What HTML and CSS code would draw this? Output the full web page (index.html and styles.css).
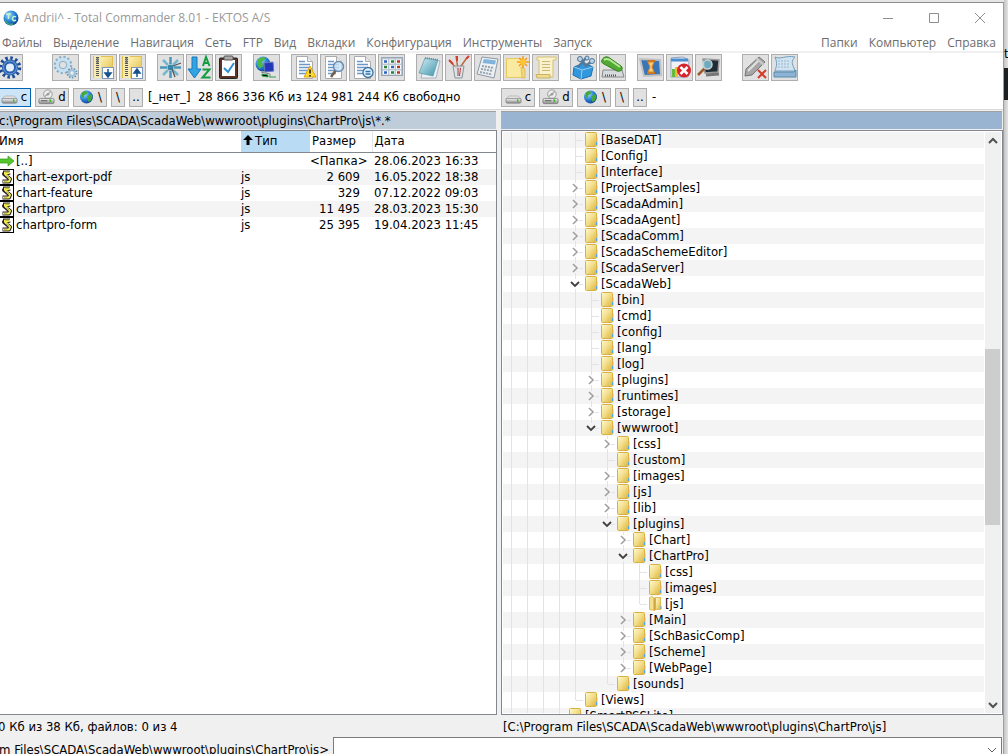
FILE: index.html
```html
<!DOCTYPE html>
<html lang="ru">

<head>
    <meta charset="UTF-8">
    <meta name="viewport" content="width=device-width, initial-scale=1.0">
    <title>Andrii^ - Total Commander 8.01 - EKTOS A/S</title>
    <link rel="stylesheet" href="styles.css">
</head>

<body>
    <!-- Shared icons -->
    <svg class="sprite" aria-hidden="true">
        <defs>
            <linearGradient id="gold" x1="0" y1="0" x2="1" y2="1">
                <stop offset="0" stop-color="#fffbd0" />
                <stop offset=".5" stop-color="#f2dc86" />
                <stop offset="1" stop-color="#d8b23c" />
            </linearGradient>
            <radialGradient id="ocean" cx=".35" cy=".3" r=".8">
                <stop offset="0" stop-color="#9fdcff" />
                <stop offset=".5" stop-color="#2a83d8" />
                <stop offset="1" stop-color="#0b3a8c" />
            </radialGradient>
            <linearGradient id="metal" x1="0" y1="0" x2="0" y2="1">
                <stop offset="0" stop-color="#f4f4f4" />
                <stop offset="1" stop-color="#8d8d8d" />
            </linearGradient>
            <linearGradient id="teal" x1="0" y1="0" x2="1" y2="1">
                <stop offset="0" stop-color="#d6f0f6" />
                <stop offset="1" stop-color="#3d93ab" />
            </linearGradient>
            <symbol id="folder" viewBox="0 0 16 16">
                <rect x=".5" y=".5" width="11" height="14" rx="1" fill="url(#gold)" stroke="#d9b048" />
                <path d="M12 5v9" stroke="#e3bd58" />
                <path d="M11.500 10v3" stroke="#4ba8e8" />
            </symbol>
            <symbol id="folder-open" viewBox="0 0 16 16">
                <rect x="6.500" y="1.500" width="5" height="12" fill="url(#gold)" stroke="#e0bd5c" />
                <path d="M.5 1.500 3 .5 6 2.500V14.500L.5 13.500z" fill="#f4df8e" stroke="#e0bd5c" />
                <path d="M5.500 2v12" stroke="#cda643" stroke-width="2" />
                <path d="M12 10v3" stroke="#4ba8e8" />
            </symbol>
            <symbol id="closed" viewBox="0 0 16 16">
                <path d="M6 4l4 4-4 4" fill="none" stroke="#a0a0a0" stroke-width="1.600" />
            </symbol>
            <symbol id="opened" viewBox="0 0 16 16">
                <path d="M4 6l4 4 4-4" fill="none" stroke="#404040" stroke-width="1.800" />
            </symbol>
            <symbol id="globe" viewBox="0 0 16 16">
                <circle cx="8" cy="8" r="6.500" fill="url(#ocean)" />
                <path d="M3 4c2-2 4-2 6-1l-1 2-2 1-1 3-2-1zM9 7l4-2 1 3-2 4-2 1-1-3z" fill="#45a83c" />
            </symbol>
            <symbol id="disk" viewBox="0 0 18 16">
                <path d="M4 7h10l3 3H1z" fill="#e8e8e8" stroke="#999" stroke-width=".6" />
                <rect x="1" y="9.500" width="16" height="5" rx="1.500" fill="url(#metal)" stroke="#777" stroke-width=".7" />
                <path d="M13.500 10.500v3" stroke="#3fbf2d" stroke-width="1.500" />
            </symbol>
            <symbol id="optical" viewBox="0 0 18 16">
                <circle cx="10.500" cy="5" r="4.500" fill="#eee" stroke="#888" stroke-width=".8" />
                <path d="M10.500 5l3-3M10.500 5l-3 2" stroke="#aaa" stroke-width="1.500" />
                <circle cx="10.500" cy="5" r="1.300" fill="#999" />
                <rect x="1" y="9.500" width="16" height="5.500" rx="1.500" fill="url(#metal)" stroke="#666" stroke-width=".7" />
                <path d="M3 12h7" stroke="#555" />
                <path d="M13 10.500v3" stroke="#3fbf2d" stroke-width="2" />
            </symbol>
            <symbol id="script" viewBox="0 0 16 16">
                <rect x="-2" y=".5" width="15.500" height="15" fill="#fff" stroke="#000" />
                <path d="M3 3.500h7M10 3.500L4 5l6 5-1 2.500H2.500" fill="none" stroke="#222" stroke-width="4" stroke-linejoin="round" />
                <path d="M4 3.500h6M10 3.500L5 5l5 5-1 2.500H3" fill="none" stroke="#f4ea4c" stroke-width="2" stroke-linejoin="round" />
                <path d="M5 3h4M6 7l3 2M4 12h3" stroke="#777" stroke-width=".7" />
            </symbol>
            <symbol id="page" viewBox="0 0 25 25">
                <path d="M4.500 1.500h11l5 5v17h-16z" fill="#fff" stroke="#aaa" />
                <path d="M15.500 1.500v5h5" fill="#e4eaf0" stroke="#aaa" />
                <path d="M7 6.500h6M7 9.500h11M7 12.500h11M7 15.500h11M7 18.500h8" stroke="#6c98c8" stroke-width="1.300" />
            </symbol>
            <symbol id="zip" viewBox="0 0 25 25">
                <rect x="2.500" y="1.500" width="19" height="21" fill="url(#gold)" stroke="#e0c050" />
                <path d="M3 1h7v22H3z" fill="#f7eab0" />
                <path d="M6.500 2v20" stroke="#555" stroke-width="3" stroke-dasharray="1 1" />
                <rect x="5.500" y="3" width="2" height="5" fill="#777" />
                <rect x="11.500" y="12.500" width="11" height="11" fill="#fff" stroke="#7d97b8" />
            </symbol>
        </defs>
    </svg>

    <div class="desktop">
        <main class="window">
            <header class="titlebar">
                <svg class="logo" viewBox="0 0 16 16">
                    <circle cx="8" cy="8" r="7.500" fill="url(#ocean)" />
                    <path d="M3 4h5M5.500 4v5M13 7c-3-2-5 2-2 4l2-1" fill="none" stroke="#c5f3cc" stroke-width="1.500" />
                    <path d="M2 10c2 4 5 5 8 4" fill="none" stroke="#3ca67a" stroke-width="1.500" />
                </svg>
                <h1>Andrii^ - Total Commander 8.01 - EKTOS A/S</h1>
                <div class="window-buttons">
                    <button aria-label="Свернуть"><svg viewBox="0 0 12 12"><path d="M1 6.500h10" /></svg></button>
                    <button aria-label="Развернуть"><svg viewBox="0 0 12 12"><path d="M1.500 1.500h9v9h-9z" /></svg></button>
                    <button aria-label="Закрыть"><svg viewBox="0 0 12 12"><path d="M1 1l10 10M11 1L1 11" /></svg></button>
                </div>
            </header>

            <nav class="menu">
                <button>Файлы</button>
                <button>Выделение</button>
                <button>Навигация</button>
                <button>Сеть</button>
                <button>FTP</button>
                <button>Вид</button>
                <button>Вкладки</button>
                <button>Конфигурация</button>
                <button>Инструменты</button>
                <button>Запуск</button>
                <span class="spacer"></span>
                <button>Папки</button>
                <button>Компьютер</button>
                <button>Справка</button>
            </nav>

            <div class="toolbar">
                <button aria-label="Настройка"><svg viewBox="0 0 25 25">
                    <circle cx="13" cy="12.500" r="9.500" fill="none" stroke="#1c4b94" stroke-width="3.500" stroke-dasharray="2.500 2.470" />
                    <circle cx="13" cy="12.500" r="6" fill="#e6f0fb" stroke="#2a62b0" stroke-width="4" />
                    <circle cx="13" cy="12.500" r="6.500" fill="none" stroke="#6f9fd8" stroke-width="1" />
                </svg></button>
                <span class="sep"></span><span class="sep"></span><span class="sep"></span>
                <button aria-label="Параметры"><svg viewBox="0 0 25 25">
                    <circle cx="10" cy="10" r="8" fill="none" stroke="#87afc9" stroke-width="2.500" stroke-dasharray="2.200 2" />
                    <circle cx="10" cy="10" r="5.500" fill="#e0e0e0" stroke="#c5e0f0" stroke-width="3.500" />
                    <circle cx="10" cy="10" r="3.700" fill="none" stroke="#6d9ab8" stroke-width=".7" />
                    <circle cx="19" cy="18" r="4.500" fill="none" stroke="#6795b4" stroke-width="2" stroke-dasharray="1.500 1.300" />
                    <circle cx="19" cy="18" r="2.700" fill="#eee" stroke="#9fc3dc" stroke-width="2" />
                </svg></button>
                <span class="sep"></span>
                <button aria-label="Упаковать"><svg viewBox="0 0 25 25"><use href="#zip" /><path d="M17 14v7M14 18l3 4 3-4z" fill="#15518c" stroke="#15518c" stroke-width="1.500" /></svg></button>
                <button aria-label="Распаковать"><svg viewBox="0 0 25 25"><use href="#zip" /><path d="M17 22v-7M14 18l3-4 3 4z" fill="#15518c" stroke="#15518c" stroke-width="1.500" /></svg></button>
                <span class="sep"></span>
                <button aria-label="Выделить все"><svg viewBox="0 0 25 25">
                    <path d="M12.500 2v7M12.500 16v7M2 12.500h7M16 12.500h7" stroke="#4b96b8" stroke-width="2.500" />
                    <path d="M5 5l5 5M15 15l5 5M20 5l-5 5M10 15l-5 5" stroke="#75b7d1" stroke-width="2.500" />
                    <circle cx="12.500" cy="12.500" r="3" fill="#3685aa" />
                    <path d="M15 11l8-3M14 14l3 8" stroke="#555" stroke-width="1.300" />
                </svg></button>
                <button aria-label="Сортировка"><svg viewBox="0 0 25 25">
                    <path d="M5 2h5v12h4L7.500 23 1 14h4z" fill="#31a4e4" stroke="#1878b8" />
                    <path d="M16 11l3-9 3.500 9M17 8h5" fill="none" stroke="#139c42" stroke-width="2" />
                    <path d="M15.500 14.500h7l-7 8h8" fill="none" stroke="#139c42" stroke-width="2" />
                </svg></button>
                <button aria-label="Проверка"><svg viewBox="0 0 25 25">
                    <rect x="3.500" y="3" width="18" height="20.500" rx="1" fill="#5a3426" stroke="#222" />
                    <rect x="6" y="5" width="13" height="16" fill="#fff" />
                    <rect x="8" y="1" width="9" height="4" rx="1" fill="#aaa" stroke="#555" />
                    <path d="M8 13l4 4 6-9" fill="none" stroke="#2b90d9" stroke-width="2" />
                </svg></button>
                <span class="sep"></span>
                <button aria-label="Сеть"><svg viewBox="0 0 25 25">
                    <circle cx="9" cy="9" r="7.500" fill="url(#ocean)" />
                    <path d="M3 6c3-5 7-4 9-3L8 7l1 4-4 3z" fill="#4fb843" />
                    <path d="M10 8l9-1 1 9-9 1z" fill="#2337b8" stroke="#6a7ab8" />
                    <path d="M20 7l4-1v10l-4 1z" fill="#d5d8e8" />
                    <path d="M7 17l9 2v3" fill="none" stroke="#888" />
                    <path d="M8 19l6 1v2l-6-1zM15 22h7" stroke="#29a349" />
                </svg></button>
                <span class="sep"></span>
                <button aria-label="Предупреждения"><svg viewBox="0 0 25 25"><use href="#page" />
                    <path d="M18 11l6 11H12z" fill="#ffd92e" stroke="#dca40c" stroke-linejoin="round" />
                    <path d="M18 14.500v4M18 20v1.500" stroke="#222" stroke-width="1.600" />
                </svg></button>
                <button aria-label="Поиск"><svg viewBox="0 0 25 25"><use href="#page" />
                    <path d="M15 15l-5 7" stroke="#745c4a" stroke-width="2.500" />
                    <circle cx="17.500" cy="11.500" r="5" fill="#c9e2f6" fill-opacity=".8" stroke="#6a8db0" stroke-width="1.500" />
                </svg></button>
                <button aria-label="Сравнить"><svg viewBox="0 0 25 25"><use href="#page" />
                    <circle cx="18" cy="17.500" r="5" fill="#e5f2fb" stroke="#3b729e" stroke-width="1.300" />
                    <path d="M15.500 16.500h5M15.500 19h5" stroke="#2677b8" stroke-width="1.500" />
                </svg></button>
                <button aria-label="Эскизы"><svg viewBox="0 0 25 25">
                    <rect x="2.500" y="2.500" width="21" height="18" fill="#b9c6d3" stroke="#97a6b5" />
                    <path d="M4 6.500h18M4 12h18M4 17.500h18" stroke="#fff" stroke-width="4" stroke-dasharray="5 1.500" />
                    <path d="M5 6.500h3M5 17.500h3M12 12h3" stroke="#2e65bd" stroke-width="2.500" />
                    <path d="M12 6.500h3M5 12h3M12 17.500h3" stroke="#298036" stroke-width="2.500" />
                    <path d="M18 6.500h3M18 12h3M18 17.500h3" stroke="#b83524" stroke-width="2.500" />
                </svg></button>
                <span class="sep"></span>
                <button aria-label="Блокнот"><svg viewBox="0 0 25 25">
                    <path d="M9 4l14 2-4 17H4z" fill="#e9f3f5" stroke="#779" stroke-width=".5" />
                    <path d="M8 3l13 2-5 16-14-3z" fill="url(#teal)" stroke="#5d98a6" stroke-width=".7" />
                    <path d="M8 3l13 2" stroke="#888" stroke-width="2" stroke-dasharray="1 1" />
                </svg></button>
                <button aria-label="Рисование"><svg viewBox="0 0 25 25">
                    <path d="M12 14L10 1M13 14l7-10M11 14L4 6" stroke="#b96c42" stroke-width="1.500" />
                    <path d="M11 1v5M20 4l3-3M3 5l4 4" stroke="#d43c2d" stroke-width="2" />
                    <path d="M7 11h11l-2 12H9z" fill="#dae7ee" fill-opacity=".8" stroke="#8b9299" />
                    <path d="M12 13v8M14.500 13l-1 8" stroke="#b33" />
                </svg></button>
                <button aria-label="Калькулятор"><svg viewBox="0 0 25 25">
                    <path d="M7 2l16 2-4 19L2 19z" fill="#eef0f2" stroke="#8c98a4" />
                    <path d="M9 4l12 1.500-1 4L7.500 8z" fill="#7fb5dd" />
                    <path d="M7 11l12 2M6 14l12 2M5 17l12 2.500" stroke="#95a3b0" stroke-width="2" stroke-dasharray="2 1" />
                </svg></button>
                <button aria-label="Новая папка"><svg viewBox="0 0 25 25">
                    <rect x="2.500" y="3.500" width="16" height="19" fill="#faeaa0" stroke="#e5c963" />
                    <path d="M17 12l4 2v9h-3z" fill="#f1d67c" stroke="#d4b352" stroke-width=".7" />
                    <path d="M19 1v12M13 7h12M15 3l8 8M23 3l-8 8" stroke="#f59b1c" stroke-width="1.500" />
                    <circle cx="19" cy="7" r="3" fill="#ffc432" />
                </svg></button>
                <button aria-label="Журнал"><svg viewBox="0 0 25 25">
                    <path d="M4 2h19v3h-3v17H6V5H4z" fill="#faf2cc" stroke="#d5c071" />
                    <path d="M3 19.500h14v3.500H4z" fill="#eddb93" stroke="#cbb35f" />
                    <path d="M9 6.500h8M9 9.500h8M9 12.500h8M9 15.500h8" stroke="#c8b878" />
                </svg></button>
                <span class="sep"></span>
                <button aria-label="Конфигурация"><svg viewBox="0 0 25 25">
                    <path d="M3 12l10-4 9 4-2 9-10 3-8-4z" fill="#3297dc" stroke="#1b6fae" />
                    <path d="M3 12l8 3 11-3M11 15l-1 9" fill="none" stroke="#93cdf4" />
                    <path d="M7 12l8-9M16 12L9 3M16 10l5-4" stroke="#56799b" stroke-width="2.500" />
                    <circle cx="9" cy="4" r="2.500" fill="#bcd3e8" stroke="#4f7396" />
                    <circle cx="16" cy="3" r="2" fill="#bcd3e8" stroke="#4f7396" />
                    <circle cx="21" cy="6" r="2.500" fill="#bcd3e8" stroke="#4f7396" />
                </svg></button>
                <button aria-label="Устройство"><svg viewBox="0 0 25 25">
                    <path d="M3 15h19l2 7H2z" fill="#d7dadd" stroke="#888" />
                    <path d="M5 20.500h12" stroke="#555" stroke-width="2" stroke-dasharray="1 1" />
                    <path d="M2 5c2-4 6-4 9-1l10 7c3 3 0 6-4 5L4 9C2 8 1 7 2 5z" fill="#53a936" stroke="#2f7f1c" />
                    <path d="M4 5c2-2 4-1 6 0l10 7" fill="none" stroke="#b6e795" stroke-width="2" />
                </svg></button>
                <span class="sep"></span>
                <button aria-label="Ожидание"><svg viewBox="0 0 25 25">
                    <path d="M2 4l20 1 1 15-17 1z" fill="#3876b7" stroke="#c2c2c2" stroke-width="2" />
                    <path d="M9 6h8M9 18h8" stroke="#c87224" stroke-width="2" />
                    <path d="M10 7h6l-2 5 2 5h-6l2-5z" fill="#f7cc72" stroke="#dc8529" />
                </svg></button>
                <button aria-label="Удалить программу"><svg viewBox="0 0 25 25">
                    <path d="M4 3l12-1 6 3-1 17H4z" fill="#f0f4fa" stroke="#91a5c0" />
                    <path d="M4 5h17" stroke="#4c8dd0" stroke-width="3" />
                    <path d="M5 14h3v8H5z" fill="#65ba3c" /><path d="M8 12h3v10H8z" fill="#f0ba32" />
                    <circle cx="17" cy="15.500" r="7" fill="#d9232b" />
                    <path d="M13.500 12l7 7M20.500 12l-7 7" stroke="#fff" stroke-width="2.500" />
                </svg></button>
                <button aria-label="Экран"><svg viewBox="0 0 25 25">
                    <path d="M7 4l16 1-1 12-13 1z" fill="#1f2c33" stroke="#999" stroke-width="1.500" />
                    <path d="M10 20l13-1" stroke="#777" stroke-width="3" />
                    <path d="M9 13l-7 7" stroke="#9b5a2c" stroke-width="2.500" />
                    <circle cx="11.500" cy="9.500" r="4.500" fill="#86cbdc" fill-opacity=".8" stroke="#c3d4dc" stroke-width="1.500" />
                </svg></button>
                <span class="sep"></span><span class="sep"></span>
                <button aria-label="Извлечь"><svg viewBox="0 0 25 25">
                    <path d="M16 2l6 5L9 20l-7 1 1-7z" fill="#a6a6a6" stroke="#777" />
                    <path d="M16 5L5 16" stroke="#e2e2e2" stroke-width="2" />
                    <path d="M13 3l8 7" stroke="#ccc" stroke-width="2" />
                    <path d="M15 15l8 8M23 15l-8 8" stroke="#d33c29" stroke-width="2" />
                </svg></button>
                <button aria-label="Лента"><svg viewBox="0 0 25 25">
                    <path d="M3 2c5 3 11-2 20 0-4 4-3 7-1 11l1 3H3c1-4 3-7 0-14z" fill="#d2e3f0" stroke="#6f9dbf" />
                    <path d="M6 6h12M6 9h12M6 12h12" stroke="#91b6d0" stroke-dasharray="2 1" />
                    <path d="M2 17h20l2-2v7H2z" fill="#8db4d4" stroke="#5788ad" />
                </svg></button>
            </div>

            <div class="panels">
                <section class="panel">
                    <div class="drives">
                        <button class="current"><svg><use href="#disk" /></svg>c</button>
                        <button><svg><use href="#optical" /></svg>d</button>
                        <button><svg><use href="#globe" /></svg>\</button>
                        <button class="small">\</button>
                        <button class="small">..</button>
                        <span class="free">[_нет_]&nbsp; 28 866 336 Кб из 124 981 244 Кб свободно</span>
                    </div>
                    <div class="path">c:\Program Files\SCADA\ScadaWeb\wwwroot\plugins\ChartPro\js\*.*</div>
                    <div class="list">
                        <table>
                            <thead>
                                <tr>
                                    <th class="name">Имя</th>
                                    <th class="type"><svg viewBox="0 0 10 10"><path d="M5 0l5 5H6.500v5h-3V5H0z" /></svg>Тип</th>
                                    <th class="size">Размер</th>
                                    <th>Дата</th>
                                </tr>
                            </thead>
                            <tbody>
                                <tr>
                                    <td><svg viewBox="0 0 16 16"><path d="M-2 6h10V3l6 5-6 5v-3H-2z" fill="#55c52d" stroke="#2f9a1b" stroke-width=".7" /></svg>[..]</td>
                                    <td></td>
                                    <td class="dir">&lt;Папка&gt;</td>
                                    <td>28.06.2023 16:33</td>
                                </tr>
                                <tr>
                                    <td><svg><use href="#script" /></svg>chart-export-pdf</td>
                                    <td>js</td>
                                    <td>2 609</td>
                                    <td>16.05.2022 18:38</td>
                                </tr>
                                <tr>
                                    <td><svg><use href="#script" /></svg>chart-feature</td>
                                    <td>js</td>
                                    <td>329</td>
                                    <td>07.12.2022 09:03</td>
                                </tr>
                                <tr>
                                    <td><svg><use href="#script" /></svg>chartpro</td>
                                    <td>js</td>
                                    <td>11 495</td>
                                    <td>28.03.2023 15:30</td>
                                </tr>
                                <tr>
                                    <td><svg><use href="#script" /></svg>chartpro-form</td>
                                    <td>js</td>
                                    <td>25 395</td>
                                    <td>19.04.2023 11:45</td>
                                </tr>
                            </tbody>
                        </table>
                    </div>
                    <div class="status">0 Кб из 38 Кб, файлов: 0 из 4</div>
                </section>

                <section class="panel">
                    <div class="drives">
                        <button><svg><use href="#disk" /></svg>c</button>
                        <button><svg><use href="#optical" /></svg>d</button>
                        <button><svg><use href="#globe" /></svg>\</button>
                        <button class="small">\</button>
                        <button class="small">..</button>
                        <span class="free">-</span>
                    </div>
                    <div class="path active"></div>
                    <div class="list scrolling">
                        <ul class="tree">
                            <li>
                                <ul>
                                    <li><div class="row"><svg><use href="#folder" /></svg>[BaseDAT]</div></li>
                                    <li><div class="row"><svg><use href="#folder" /></svg>[Config]</div></li>
                                    <li><div class="row"><svg><use href="#folder" /></svg>[Interface]</div></li>
                                    <li class="branch"><div class="row"><button aria-label="Раскрыть"><svg><use href="#closed" /></svg></button><svg><use href="#folder" /></svg>[ProjectSamples]</div></li>
                                    <li class="branch"><div class="row"><button aria-label="Раскрыть"><svg><use href="#closed" /></svg></button><svg><use href="#folder" /></svg>[ScadaAdmin]</div></li>
                                    <li class="branch"><div class="row"><button aria-label="Раскрыть"><svg><use href="#closed" /></svg></button><svg><use href="#folder" /></svg>[ScadaAgent]</div></li>
                                    <li class="branch"><div class="row"><button aria-label="Раскрыть"><svg><use href="#closed" /></svg></button><svg><use href="#folder" /></svg>[ScadaComm]</div></li>
                                    <li class="branch"><div class="row"><button aria-label="Раскрыть"><svg><use href="#closed" /></svg></button><svg><use href="#folder" /></svg>[ScadaSchemeEditor]</div></li>
                                    <li class="branch"><div class="row"><button aria-label="Раскрыть"><svg><use href="#closed" /></svg></button><svg><use href="#folder" /></svg>[ScadaServer]</div></li>
                                    <li class="branch"><div class="row"><button aria-label="Свернуть"><svg><use href="#opened" /></svg></button><svg><use href="#folder" /></svg>[ScadaWeb]</div>
                                        <ul>
                                            <li><div class="row"><svg><use href="#folder" /></svg>[bin]</div></li>
                                            <li><div class="row"><svg><use href="#folder" /></svg>[cmd]</div></li>
                                            <li><div class="row"><svg><use href="#folder" /></svg>[config]</div></li>
                                            <li><div class="row"><svg><use href="#folder" /></svg>[lang]</div></li>
                                            <li><div class="row"><svg><use href="#folder" /></svg>[log]</div></li>
                                            <li class="branch"><div class="row"><button aria-label="Раскрыть"><svg><use href="#closed" /></svg></button><svg><use href="#folder" /></svg>[plugins]</div></li>
                                            <li class="branch"><div class="row"><button aria-label="Раскрыть"><svg><use href="#closed" /></svg></button><svg><use href="#folder" /></svg>[runtimes]</div></li>
                                            <li class="branch"><div class="row"><button aria-label="Раскрыть"><svg><use href="#closed" /></svg></button><svg><use href="#folder" /></svg>[storage]</div></li>
                                            <li class="branch"><div class="row"><button aria-label="Свернуть"><svg><use href="#opened" /></svg></button><svg><use href="#folder" /></svg>[wwwroot]</div>
                                                <ul>
                                                    <li class="branch"><div class="row"><button aria-label="Раскрыть"><svg><use href="#closed" /></svg></button><svg><use href="#folder" /></svg>[css]</div></li>
                                                    <li><div class="row"><svg><use href="#folder" /></svg>[custom]</div></li>
                                                    <li class="branch"><div class="row"><button aria-label="Раскрыть"><svg><use href="#closed" /></svg></button><svg><use href="#folder" /></svg>[images]</div></li>
                                                    <li class="branch"><div class="row"><button aria-label="Раскрыть"><svg><use href="#closed" /></svg></button><svg><use href="#folder" /></svg>[js]</div></li>
                                                    <li class="branch"><div class="row"><button aria-label="Раскрыть"><svg><use href="#closed" /></svg></button><svg><use href="#folder" /></svg>[lib]</div></li>
                                                    <li class="branch"><div class="row"><button aria-label="Свернуть"><svg><use href="#opened" /></svg></button><svg><use href="#folder" /></svg>[plugins]</div>
                                                        <ul>
                                                            <li class="branch"><div class="row"><button aria-label="Раскрыть"><svg><use href="#closed" /></svg></button><svg><use href="#folder" /></svg>[Chart]</div></li>
                                                            <li class="branch"><div class="row"><button aria-label="Свернуть"><svg><use href="#opened" /></svg></button><svg><use href="#folder" /></svg>[ChartPro]</div>
                                                                <ul>
                                                                    <li><div class="row"><svg><use href="#folder" /></svg>[css]</div></li>
                                                                    <li><div class="row"><svg><use href="#folder" /></svg>[images]</div></li>
                                                                    <li><div class="row"><svg><use href="#folder-open" /></svg>[js]</div></li>
                                                                </ul>
                                                            </li>
                                                            <li class="branch"><div class="row"><button aria-label="Раскрыть"><svg><use href="#closed" /></svg></button><svg><use href="#folder" /></svg>[Main]</div></li>
                                                            <li class="branch"><div class="row"><button aria-label="Раскрыть"><svg><use href="#closed" /></svg></button><svg><use href="#folder" /></svg>[SchBasicComp]</div></li>
                                                            <li class="branch"><div class="row"><button aria-label="Раскрыть"><svg><use href="#closed" /></svg></button><svg><use href="#folder" /></svg>[Scheme]</div></li>
                                                            <li class="branch"><div class="row"><button aria-label="Раскрыть"><svg><use href="#closed" /></svg></button><svg><use href="#folder" /></svg>[WebPage]</div></li>
                                                        </ul>
                                                    </li>
                                                    <li><div class="row"><svg><use href="#folder" /></svg>[sounds]</div></li>
                                                </ul>
                                            </li>
                                        </ul>
                                    </li>
                                    <li><div class="row"><svg><use href="#folder" /></svg>[Views]</div></li>
                                </ul>
                            </li>
                            <li><div class="row"><svg><use href="#folder" /></svg>[SmartPSSLite]</div></li>
                        </ul>
                        <div class="scrollbar">
                            <button aria-label="Вверх"><svg viewBox="0 0 16 16"><path d="M4 10l4-4 4 4" /></svg></button>
                            <div class="track"><div class="thumb"></div></div>
                            <button aria-label="Вниз"><svg viewBox="0 0 16 16"><path d="M4 6l4 4 4-4" /></svg></button>
                        </div>
                    </div>
                    <div class="status">[C:\Program Files\SCADA\ScadaWeb\wwwroot\plugins\ChartPro\js]</div>
                </section>
            </div>

            <div class="command">
                <label for="command">c:\Program Files\SCADA\ScadaWeb\wwwroot\plugins\ChartPro\js&gt;</label>
                <div class="combo">
                    <input id="command" type="text">
                    <button aria-label="История"><svg viewBox="0 0 16 16"><path d="M4 6l4 4 4-4" /></svg></button>
                </div>
            </div>
        </main>

        <aside class="behind">
            <span>t</span>
            <div class="dark"></div>
        </aside>
    </div>
</body>

</html>
```
FILE: styles.css
```css
* {
    box-sizing: border-box;
}

body {
    margin: 0;
    font-family: 'DejaVu Sans Condensed', 'DejaVu Sans', Tahoma, sans-serif;
    font-size: 13px;
    line-height: 16px;
    color: #000;
    background-color: #e6e6e6;
}

h1,
ul {
    margin: 0;
    padding: 0;
}

button {
    padding: 0;
    border: none;
    background: none;
    font: inherit;
    color: inherit;
}

svg {
    display: block;
    flex: none;
}

.sprite {
    position: absolute;
    width: 0;
    height: 0;
}

.desktop {
    display: flex;
    height: 100vh;
    padding-top: 2px;
    overflow: hidden;
}

.window {
    flex: 1;
    min-width: 0;
    display: flex;
    flex-direction: column;
    margin-left: -4px;
    margin-bottom: -8px;
    border-top: 1px solid #8c8c8c;
    border-right: 1px solid #a0a0a0;
    background-color: #fff;
}

/* Title and menu */
.titlebar {
    display: flex;
    align-items: center;
    height: 29px;
    padding-left: 7px;
    font-family: 'Open Sans', 'Segoe UI', sans-serif;
    color: #999;
}

.titlebar h1 {
    flex: 1;
    margin-left: 5px;
    font-size: 12px;
    font-weight: normal;
}

.logo {
    width: 16px;
    height: 16px;
}

.window-buttons {
    display: flex;
}

.window-buttons button {
    display: flex;
    justify-content: center;
    width: 46px;
}

.window-buttons svg {
    width: 12px;
    height: 12px;
    fill: none;
    stroke: #8c8c8c;
}

.menu {
    display: flex;
    align-items: center;
    gap: 11px;
    height: 21px;
    padding: 2px 7px 0 6px;
    border-bottom: 2px solid #f0f0f0;
    font-family: 'Open Sans', 'Segoe UI', sans-serif;
    font-size: 12px;
    color: #6d6d6d;
}

.spacer {
    flex: 1;
}

/* Button bar */
.toolbar {
    display: flex;
    gap: 2px;
    padding-top: 1px;
    height: 34px;
}

.toolbar button {
    width: 27px;
    height: 27px;
    flex: none;
    border: 1px solid #adadad;
    background-color: #e1e1e1;
}

.toolbar svg {
    width: 25px;
    height: 25px;
}

.sep {
    width: 7px;
}

/* Panels */
.panels {
    flex: 1;
    min-height: 0;
    display: flex;
    background: linear-gradient(#fff 22px, #f0f0f0 22px);
}

.panel {
    flex: 1;
    min-width: 0;
    display: flex;
    flex-direction: column;
}

.panel + .panel {
    flex: 0 1 502px;
    margin-left: 4px;
}

.drives {
    display: flex;
    align-items: center;
    gap: 4px;
    height: 23px;
    padding-bottom: 2px;
    border-bottom: 1px solid #d9d9d9;
    white-space: pre;
    margin-bottom: 1px;
}

.panel:first-child .drives {
    margin-right: -4px;
    padding-left: 1px;
}

.drives button {
    display: flex;
    flex: none;
    align-items: center;
    justify-content: center;
    gap: 3px;
    width: 34px;
    height: 19px;
    border: 1px solid #adadad;
    background-color: #e1e1e1;
}

.drives .small {
    width: 14px;
}

.drives .current {
    border-color: #0063b1;
    background-color: #cce4f7;
}

.drives svg {
    width: 17px;
    height: 16px;
}

.free {
    padding-left: 1px;
}

.path {
    height: 18px;
    margin-right: 1px;
    padding-left: 3px;
    border-top: 1px solid #a0a0a0;
    line-height: 18px;
    background-color: #bfcddb;
    white-space: nowrap;
    overflow: hidden;
}

.path.active {
    background-color: #99b4d1;
}

.list {
    flex: 1;
    min-height: 0;
    margin-top: 1px;
    border: 1px solid #828790;
    background-color: #fff;
    overflow: hidden;
}

.status {
    height: 22px;
    padding-left: 2px;
    line-height: 23px;
    white-space: nowrap;
}

/* File list */
table {
    width: 100%;
    border-collapse: collapse;
    table-layout: fixed;
}

th {
    height: 21px;
    padding: 0 2px;
    border-bottom: 1px solid #828790;
    font-weight: normal;
    text-align: left;
    background-color: #fff;
}

th.name {
    width: 244px;
}

th.type {
    width: 69px;
    background-color: #b9dcf4;
}

th.size {
    width: 62px;
    border-right: 1px solid #e5e5e5;
}

.type svg {
    display: inline-block;
    width: 10px;
    height: 10px;
    margin-right: 2px;
}

td {
    height: 16px;
    padding: 0;
    white-space: nowrap;
}

td:first-child {
    padding-left: 3px;
}

td:nth-child(3) {
    padding-right: 12px;
    text-align: right;
}

td:nth-child(3).dir {
    padding-right: 9px;
}

td:nth-child(4) {
    padding-left: 2px;
}

tbody tr:nth-child(even) {
    background-color: #f4f4f4;
}

td svg {
    float: left;
    width: 16px;
    height: 16px;
}

/* Folder tree */
.scrolling {
    display: flex;
    padding: 1px;
}

.tree {
    flex: 1;
    padding-left: 48px;
    background:
        repeating-linear-gradient(90deg, transparent 0 8px, #e3e3e3 8px 9px, transparent 9px 16px) 0 0 / 48px 100% no-repeat,
        repeating-linear-gradient(#f4f4f4 0 16px, #fff 16px 32px);
}

.tree ul {
    padding-left: 16px;
}

.tree li {
    list-style: none;
    background: linear-gradient(#e3e3e3, #e3e3e3) 8px 0 / 1px 100% no-repeat;
}

.tree li:last-child {
    background-size: 1px 8px;
}

/* The guide stops short of the expand arrow */
.tree .branch {
    background:
        linear-gradient(#e3e3e3, #e3e3e3) 8px 0 / 1px 3px no-repeat,
        linear-gradient(transparent 13px, #e3e3e3 13px) 8px 0 / 1px 100% no-repeat;
}

.tree .branch:last-child {
    background: linear-gradient(#e3e3e3, #e3e3e3) 8px 0 / 1px 3px no-repeat;
}

.row {
    display: flex;
    height: 16px;
    padding-left: 18px;
    background: linear-gradient(#e3e3e3, #e3e3e3) 9px 8px / 7px 1px no-repeat;
    white-space: nowrap;
}

.branch > .row {
    padding-left: 0;
    background-position: 12px 8px;
    background-size: 4px 1px;
}

.row svg {
    width: 16px;
    height: 16px;
}

.row button {
    width: 18px;
}

.scrollbar {
    width: 16px;
    margin-left: 1px;
    display: flex;
    flex-direction: column;
    background-color: #f0f0f0;
}

.scrollbar button,
.combo button {
    width: 16px;
    height: 17px;
}

.scrollbar path {
    fill: none;
    stroke: #505050;
    stroke-width: 2;
}

.track {
    flex: 1;
    padding-top: 200px;
}

.thumb {
    width: 15px;
    height: 176px;
    background-color: #cdcdcd;
}

/* Command line */
.command {
    display: flex;
    height: 25px;
    background-color: #f0f0f0;
}

.command label {
    display: flex;
    justify-content: flex-end;
    width: 337px;
    padding-right: 4px;
    line-height: 25px;
    white-space: nowrap;
    overflow: hidden;
}

.combo {
    flex: 1;
    display: flex;
    margin-right: 1px;
    border: 1px solid #7a7a7a;
    background-color: #fff;
}

.combo input {
    flex: 1;
    border: none;
    outline: none;
    background: none;
    font: inherit;
}

.combo button {
    height: 23px;
    margin-right: 1px;
}

.combo path {
    fill: none;
    stroke: #606060;
}

/* Strip of the window underneath */
.behind {
    width: 4px;
    margin-top: -2px;
    padding-top: 46px;
    overflow: hidden;
    background: linear-gradient(90deg, #c4c4c4, #e4e4e4);
}

.dark {
    height: 32px;
    margin-top: 6px;
    background-color: #1c1f21;
}
```
